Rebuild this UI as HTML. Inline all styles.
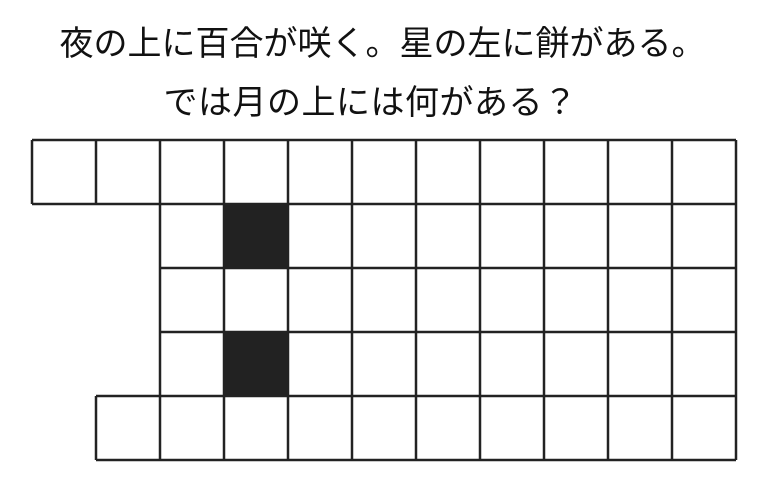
<!DOCTYPE html>
<html><head><meta charset="utf-8"><style>
html,body{margin:0;padding:0;background:#fff;width:769px;height:498px;overflow:hidden}
.t{position:absolute;left:0;width:769px;text-align:center;font-family:"Liberation Sans","Noto Sans CJK JP",sans-serif;font-size:34px;color:#111;line-height:40px;white-space:nowrap}
svg{position:absolute;left:0;top:0}
</style></head><body>
<div class="t" style="top:24px;left:-2px">夜の上に百合が咲く。星の左に餅がある。</div>
<div class="t" style="top:83px;left:-14px;letter-spacing:0.5px">では月の上には何がある？</div>
<svg width="769" height="498">
<g fill="#222">
<rect x="224" y="204" width="64" height="64"/>
<rect x="224" y="332" width="64" height="64"/>
</g>
<g stroke="#222" stroke-width="2.5" fill="none">
<path d="M32 140H736M32 204H736M160 268H736M160 332H736M96 396H736M96 460H736"/>
<path d="M32 140V204M96 140V204M96 396V460"/>
<path d="M160 140V460M224 140V460M288 140V460M352 140V460M416 140V460M480 140V460M544 140V460M608 140V460M672 140V460M736 140V460"/>
</g>
</svg>
</body></html>
